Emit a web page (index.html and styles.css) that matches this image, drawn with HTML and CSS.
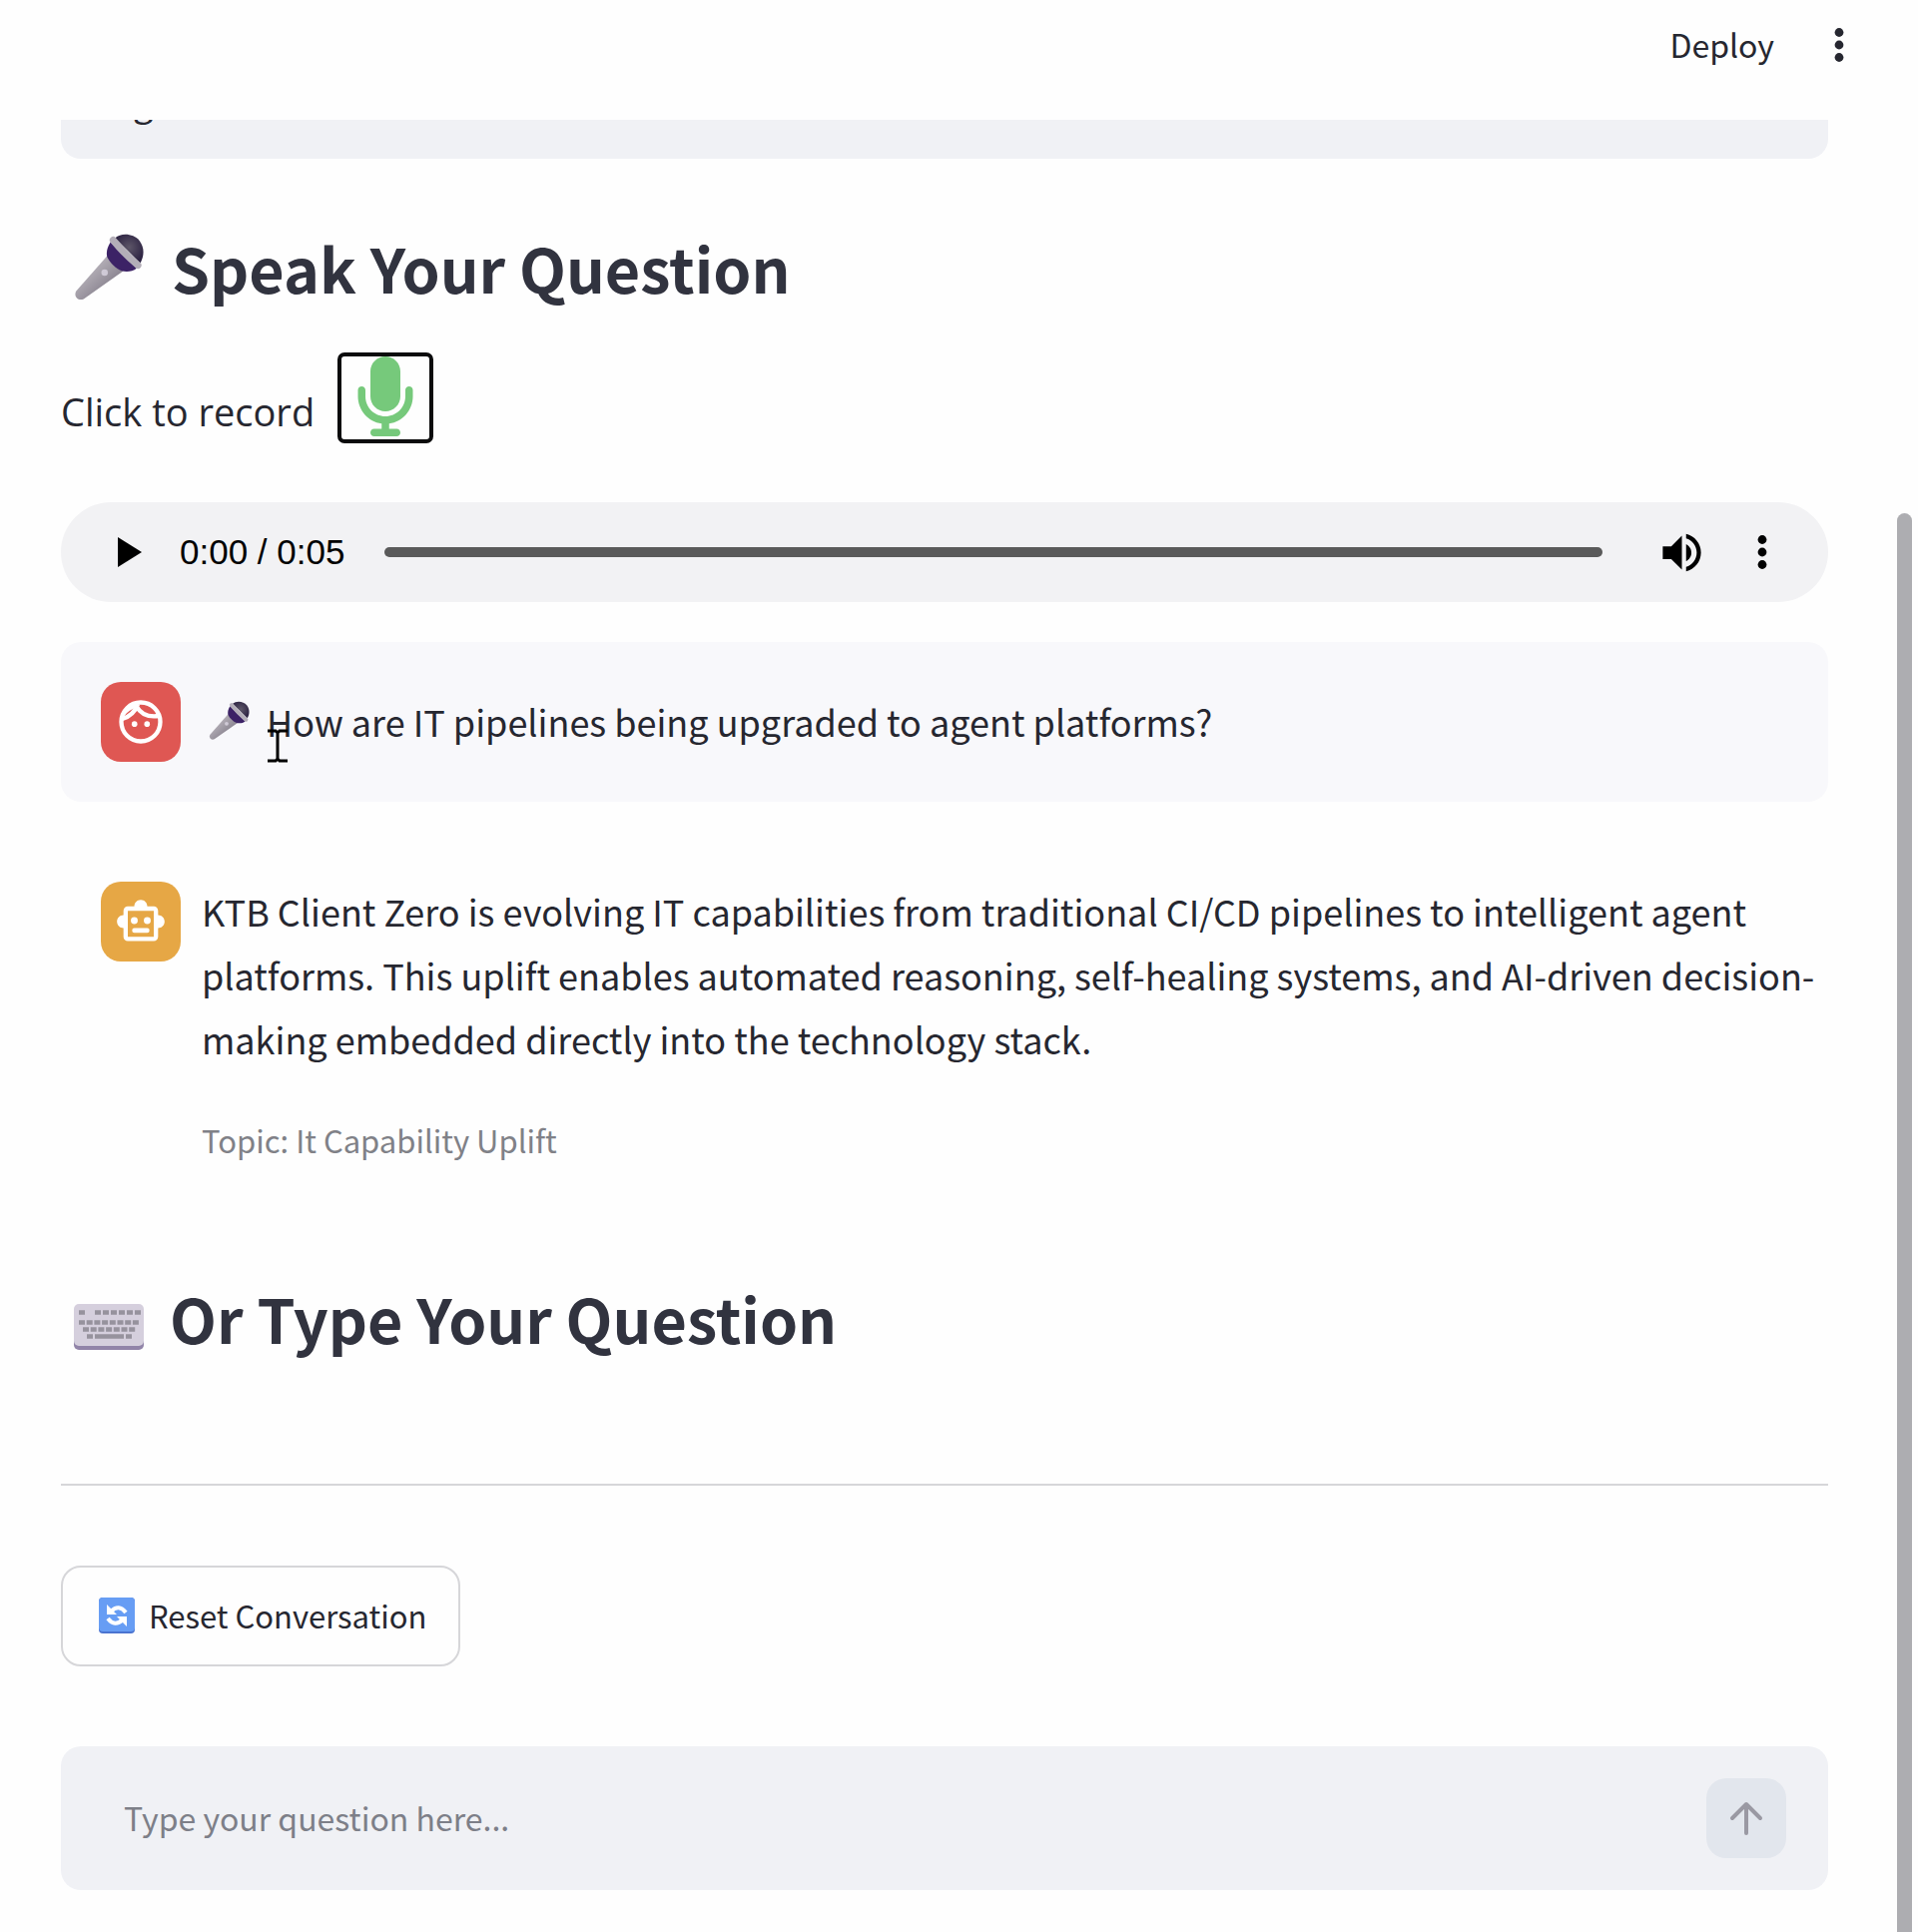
FILE: index.html
```html
<!DOCTYPE html>
<html lang="en">
<head>
    <meta charset="UTF-8">
    <meta name="viewport" content="width=device-width, initial-scale=1.0">
    <title>Voice Assistant</title>
    <link rel="stylesheet" href="styles.css">
</head>
<body>
    <!-- shared emoji drawing -->
    <svg class="defs" width="0" height="0" aria-hidden="true">
        <defs>
            <linearGradient id="handle" x1="0" y1="0" x2="1" y2="1">
                <stop offset="0.3" stop-color="#b5b0b8"/>
                <stop offset="0.8" stop-color="#7f7986"/>
            </linearGradient>
            <radialGradient id="head" cx="0.5" cy="0.45" r="0.6">
                <stop offset="0" stop-color="#5d5668"/>
                <stop offset="1" stop-color="#2a2040"/>
            </radialGradient>
            <symbol id="mic" viewBox="40 45 220 210">
                <path fill="url(#handle)" d="M142 114 L47 222 C38 238 53 254 70 246 L192 160 Z"/>
                <path fill="#3c2266" d="M152 72 C142 88 138 104 142 118 C152 138 168 152 186 160 C202 164 220 162 232 152 Z"/>
                <path fill="url(#head)" d="M166 60 C186 42 222 46 241 68 C256 88 256 114 243 136 Z"/>
                <path fill="none" stroke="#b3aeb8" stroke-width="21" stroke-linecap="round" d="M160 66 Q194 108 236 143"/>
                <circle cx="134" cy="165" r="10" fill="#cfcad6"/>
            </symbol>
        </defs>
    </svg>

    <header class="header">
        <button class="deploy">Deploy</button>
        <button class="menu" aria-label="Main menu">
            <svg viewBox="0 0 10 34" width="10" height="34" fill="#262730"><circle cx="5" cy="4.500" r="4.400"/><circle cx="5" cy="17" r="4.400"/><circle cx="5" cy="29.500" r="4.400"/></svg>
        </button>
    </header>

    <main class="main">
        <div class="previous">g</div>

        <h2 class="heading">
            <svg class="heading-icon" width="72" height="70"><use href="#mic"/></svg>
            Speak Your Question
        </h2>

        <div class="recorder">
            <span class="recorder-label" id="record-label">Click to record</span>
            <button class="record" aria-labelledby="record-label">
                <svg viewBox="0 0 384 512" width="60" height="80" fill="#76c97b"><path d="M192 0C139 0 96 43 96 96V256c0 53 43 96 96 96s96-43 96-96V96c0-53-43-96-96-96zM64 216c0-13.300-10.700-24-24-24s-24 10.700-24 24v40c0 89.100 66.200 162.700 152 174.400V464H120c-13.300 0-24 10.700-24 24s10.700 24 24 24H264c13.300 0 24-10.700 24-24s-10.700-24-24-24H216V430.400c85.800-11.700 152-85.300 152-174.400V216c0-13.300-10.700-24-24-24s-24 10.700-24 24v40c0 70.700-57.300 128-128 128s-128-57.300-128-128V216z"/></svg>
            </button>
        </div>

        <div class="player">
            <button class="player-btn" aria-label="Play">
                <svg viewBox="0 0 24 30" width="24" height="30"><path d="M0 0 24 15 0 30Z"/></svg>
            </button>
            <span class="time">0:00 / 0:05</span>
            <input class="seek" type="range" min="0" max="5" value="0" aria-label="Seek">
            <button class="player-btn" aria-label="Mute">
                <svg viewBox="0 0 24 24" width="51" height="51"><path d="M3 9v6h4l5 5V4L7 9H3zm13.500 3c0-1.770-1.020-3.290-2.500-4.030v8.050c1.480-.73 2.500-2.250 2.500-4.020zM14 3.230v2.060c2.890.86 5 3.540 5 6.710s-2.110 5.850-5 6.710v2.060c4.010-.91 7-4.490 7-8.770s-2.990-7.860-7-8.770z"/></svg>
            </button>
            <button class="player-btn" aria-label="More options">
                <svg viewBox="0 0 10 34" width="10" height="34"><circle cx="5" cy="4.500" r="4.400"/><circle cx="5" cy="17" r="4.400"/><circle cx="5" cy="29.500" r="4.400"/></svg>
            </button>
        </div>

        <div class="message user">
            <div class="avatar">
                <svg viewBox="0 0 24 24" width="52" height="52"><g fill="none" stroke="#fff" stroke-width="2"><circle cx="12" cy="12" r="9"/><path d="M3.500 10.600C7 9.500 9.500 7 10.600 3.800M9.800 4.500C12 8.500 16 10 20.600 9.200"/></g><g fill="#fff"><path d="M5 6.500Q7 3.500 11 3L9.500 5.500Q6.500 6.500 4.500 9Z"/><circle cx="9.100" cy="13" r="1.300"/><circle cx="14.900" cy="13" r="1.300"/></g></svg>
            </div>
            <p class="text question">
                <svg width="42" height="40"><use href="#mic"/></svg>
                How are IT pipelines being upgraded to agent platforms?
            </p>
            <svg class="cursor" viewBox="0 0 20 34" width="20" height="34"><path fill="none" stroke="#000" stroke-width="3" d="M0 2H8L10 4L12 2H20M10 4V30M0 32H8L10 30L12 32H20"/></svg>
        </div>

        <div class="message assistant">
            <div class="avatar">
                <svg viewBox="0 0 24 24" width="52" height="52" fill="#fff"><path fill-rule="evenodd" d="M20 9V7c0-1.100-.9-2-2-2h-3c0-1.660-1.340-3-3-3S9 3.340 9 5H6c-1.100 0-2 .9-2 2v2c-1.660 0-3 1.340-3 3s1.340 3 3 3v4c0 1.100.9 2 2 2h12c1.100 0 2-.9 2-2v-4c1.660 0 3-1.340 3-3s-1.340-3-3-3zM6 7h12v12H6z"/><circle cx="9" cy="11.500" r="1.600"/><circle cx="15" cy="11.500" r="1.600"/><rect x="8" y="15" width="8" height="2.200" rx="1"/></svg>
            </div>
            <div>
                <p class="text">KTB Client Zero is evolving IT capabilities from traditional CI/CD pipelines to intelligent agent platforms. This uplift enables automated reasoning, self-healing systems, and AI-driven decision-making embedded directly into the technology stack.</p>
                <p class="topic">Topic: It Capability Uplift</p>
            </div>
        </div>

        <h2 class="heading type-heading">
            <svg class="heading-icon keyboard" viewBox="0 0 70 46" width="70" height="46">
                <rect y="4" width="70" height="42" rx="5" fill="#9184a8"/>
                <rect width="70" height="42" rx="5" fill="#d5cfdd"/>
                <g stroke="#96929d" stroke-width="4.500" fill="none">
                    <path d="M5 8.500h6M21 8.500h46" stroke-dasharray="6 2"/>
                    <path d="M5 18.500h60" stroke-dasharray="6 1.700"/>
                    <path d="M9 25.500h53" stroke-dasharray="6 1.700"/>
                    <path d="M13 32.500h6M21 32.500h29M52 32.500h6"/>
                </g>
            </svg>
            Or Type Your Question
        </h2>

        <hr class="divider">

        <button class="reset">
            <svg viewBox="0 0 36 36" width="36" height="36"><rect width="36" height="36" rx="4" fill="#4b74d0"/><rect width="36" height="34" rx="4" fill="#679df4"/><g fill="none" stroke="#fff" stroke-width="4"><path d="M12 14Q20 6 27 15"/><path d="M24 22Q16 30 9 21"/></g><path fill="#fff" d="M8 7V17H18ZM28 29V19H18Z"/></svg>
            Reset Conversation
        </button>

        <form class="chat-input">
            <input class="chat-text" type="text" placeholder="Type your question here..." aria-label="Type your question here...">
            <button class="send" type="button" aria-label="Send">
                <svg viewBox="0 0 34 34" width="34" height="34" fill="none" stroke="#9a99a3" stroke-width="4" stroke-linecap="round" stroke-linejoin="round"><path d="M17 32V3M3 17 17 3 31 17"/></svg>
            </button>
        </form>
    </main>
    <div class="scrollbar"></div>
</body>
</html>
```
FILE: styles.css
```css
* { box-sizing: border-box; }
body { margin: 0; background: #fefefe; color: #262730; font-family: "Noto Sans CJK SC", sans-serif; font-size: 36px; }
button { padding: 0; border: none; background: none; color: inherit; font-family: inherit; }
svg { display: block; flex-shrink: 0; }
h2, p { margin: 0; }
.defs { position: absolute; }

.header { display: flex; justify-content: flex-end; align-items: center; gap: 60px; height: 120px; padding: 0 74px 30px 0; }
.deploy { padding-bottom: 2px; font-size: 32px; line-height: 48px; }

.main { padding: 0 90px 40px 61px; }
.previous { display: flex; align-items: flex-end; height: 39px; padding: 0 72px 26px; overflow: hidden; line-height: 64px; background: #f0f1f5; border-radius: 0 0 20px 20px; }

.heading { display: flex; align-items: center; gap: 26px; margin-top: 67px; padding-left: 13px; color: #31333f; font-size: 61px; font-weight: 600; line-height: 84px; }
.recorder { display: flex; align-items: flex-start; gap: 23px; margin-top: 43px; }
.recorder-label { padding-top: 33px; font-family: "Open Sans", sans-serif; font-size: 38px; line-height: 52px; }
.record { display: flex; justify-content: center; align-items: center; width: 96px; height: 91px; padding-bottom: 3px; border: 4px solid #0b0b0c; border-radius: 7px; }

.player { display: flex; align-items: center; height: 100px; margin-top: 59px; padding: 0 61px 0 57px; border-radius: 50px; background: #f2f2f4; }
.time { margin: 0 40px 0 38px; color: #000; font-family: "Liberation Sans", sans-serif; font-size: 35px; line-height: 40px; }
.seek { flex: 1; height: 10px; margin: 0 54px 0 0; border-radius: 5px; background: #5a5a5a; appearance: none; }
.seek::-webkit-slider-thumb { width: 1px; height: 10px; appearance: none; }
.player-btn + .player-btn { margin-left: 50px; }

.message { display: flex; gap: 21px; margin-top: 40px; padding: 40px 0 40px 40px; border-radius: 20px; }
.user { position: relative; background: #f8f8fb; }
.avatar { display: flex; flex-shrink: 0; justify-content: center; align-items: center; width: 80px; height: 80px; border-radius: 20px; background: #df5753; }
.assistant .avatar { background: #e6a745; }
.text { margin-top: -3px; font-size: 36px; line-height: 64px; }
.question { display: flex; align-items: center; gap: 16px; padding-left: 7px; }
.cursor { position: absolute; left: 207px; top: 87px; }
.topic { margin-top: 42px; color: #808187; font-size: 31px; line-height: 56px; }

.type-heading { margin-top: 68px; }
.keyboard { margin-top: 18px; }
.divider { height: 2px; margin: 124px 0 80px; border: none; background: #d6d6d9; }
.reset { display: flex; align-items: center; gap: 14px; height: 101px; padding: 0 32px 2px 36px; border: 2px solid #d6d6d9; border-radius: 20px; font-size: 31px; line-height: 48px; }

.chat-input { display: flex; align-items: center; height: 144px; margin-top: 80px; padding: 0 42px 0 63px; border-radius: 20px; background: #f0f1f5; }
.chat-text { flex: 1; padding: 0 0 3px; border: none; outline: none; background: none; font-family: inherit; font-size: 32px; line-height: 48px; }
.chat-text::placeholder { color: #7d7f88; }
.send { display: flex; justify-content: center; align-items: center; width: 80px; height: 80px; border-radius: 20px; background: #e2e6ed; }

.scrollbar { position: fixed; top: 514px; right: 6px; bottom: 0; width: 15px; border-radius: 8px 8px 0 0; background: #adadb1; }
```
